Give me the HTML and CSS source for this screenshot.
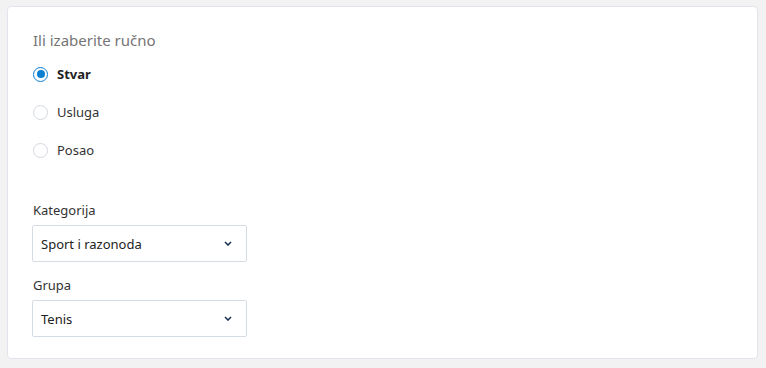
FILE: index.html
```html
<!DOCTYPE html>
<html lang="sr">
<head>
  <meta charset="UTF-8">
  <meta name="viewport" content="width=device-width, initial-scale=1.0">
  <title>Izbor kategorije</title>
  <link rel="stylesheet" href="styles.css">
</head>
<body>

  <div class="card">
    <h2 class="title">Ili izaberite ručno</h2>

    <div class="radios">
      <label class="radio checked"><span class="dot"></span>Stvar</label>
      <label class="radio"><span class="dot"></span>Usluga</label>
      <label class="radio"><span class="dot"></span>Posao</label>
    </div>

    <div class="field">
      <div class="field-label">Kategorija</div>
      <div class="select">
        <span>Sport i razonoda</span>
        <svg class="chevron" width="8" height="5" viewBox="0 0 8 5"><path d="M1 1 L4 4 L7 1" fill="none" stroke="#1d3557" stroke-width="1.6"/></svg>
      </div>
    </div>

    <div class="field">
      <div class="field-label">Grupa</div>
      <div class="select">
        <span>Tenis</span>
        <svg class="chevron" width="8" height="5" viewBox="0 0 8 5"><path d="M1 1 L4 4 L7 1" fill="none" stroke="#1d3557" stroke-width="1.6"/></svg>
      </div>
    </div>
  </div>

</body>
</html>
```

FILE: styles.css
```css
body {
  font-family: "Noto Sans", "Open Sans", sans-serif;
  background: #f2f2f2;
  margin: 0;
  padding: 6px 8px 8px 7px;
  color: #333;
}

.card {
  background: white;
  border: 1px solid #e1e4ea;
  border-radius: 4px;
  padding: 22px 25px 0;
  box-sizing: border-box;
  height: 353px;
}

.title {
  font-size: 15px;
  font-weight: normal;
  color: #757575;
  margin: 0 0 12px;
  line-height: 22px;
}

.radios {
  display: flex;
  flex-direction: column;
  gap: 16px;
  margin-bottom: 40px;
}

.radio {
  display: flex;
  align-items: center;
  gap: 9px;
  font-size: 13px;
  line-height: 22px;
  color: #333;
}

.dot {
  width: 15px;
  height: 15px;
  border: 1px solid #d3d8de;
  border-radius: 50%;
  box-sizing: border-box;
  display: flex;
  align-items: center;
  justify-content: center;
}

.radio.checked {
  font-weight: bold;
  color: #222;
}

.radio.checked .dot {
  border: 1.5px solid #0b7fd1;
}

.radio.checked .dot::after {
  content: "";
  width: 8px;
  height: 8px;
  border-radius: 50%;
  background: #0b7fd1;
}

.field {
  margin-bottom: 14px;
}

.field-label {
  font-size: 13px;
  line-height: 18px;
  margin-bottom: 6px;
  color: #333;
}

.select {
  width: 215px;
  height: 37px;
  margin-left: -1px;
  border: 1px solid #d6dce3;
  border-radius: 2px;
  box-sizing: border-box;
  display: flex;
  align-items: center;
  justify-content: space-between;
  padding: 0 14px 0 8px;
  font-size: 13px;
  color: #222;
}
```
